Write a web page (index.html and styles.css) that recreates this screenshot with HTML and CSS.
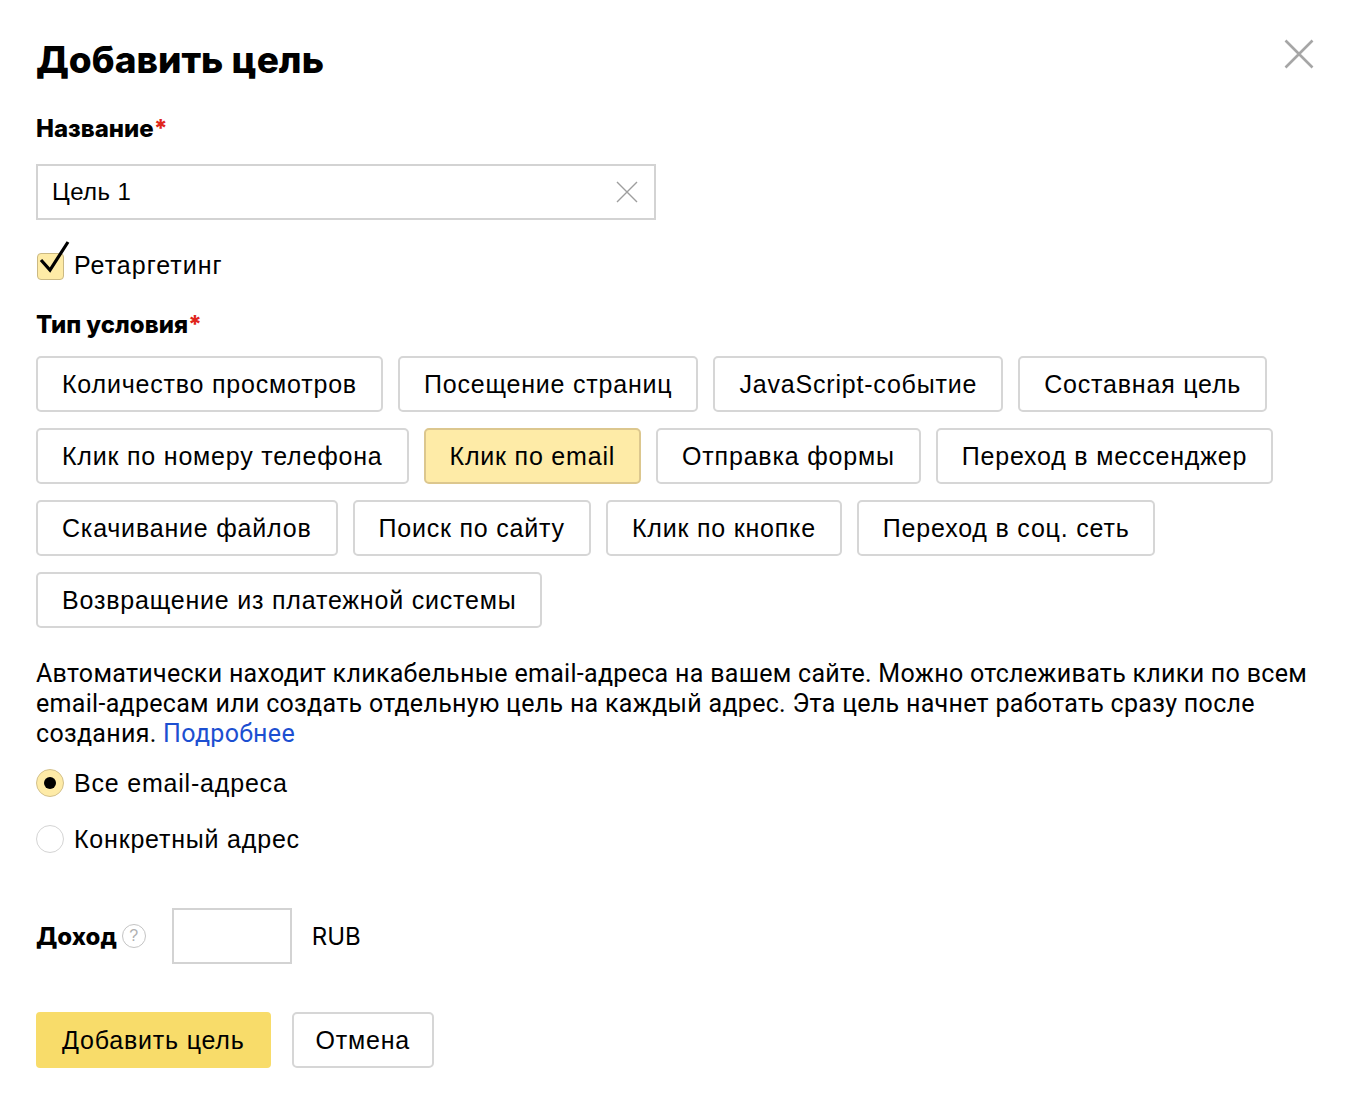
FILE: index.html
```html
<!DOCTYPE html>
<html lang="ru">
<head>
<meta charset="utf-8">
<link rel="stylesheet" href="styles.css">
</head>
<body>
<div class="dialog">
  <div class="header">
    <h1 class="title">Добавить цель</h1>
    <span class="close" aria-label="Закрыть">
      <svg width="30" height="30" viewBox="0 0 30 30"><path d="M1.5 1.5 L28.5 28.5 M28.5 1.5 L1.5 28.5" stroke="#a6a6a6" stroke-width="2.6" fill="none"/></svg>
    </span>
  </div>

  <div class="label">Название<span class="req">*</span></div>
  <div class="input name-input">
    <span class="input-text">Цель 1</span>
    <svg class="clear" width="22" height="22" viewBox="0 0 22 22"><path d="M1 1 L21 21 M21 1 L1 21" stroke="#9e9e9e" stroke-width="1.4" fill="none"/></svg>
  </div>

  <div class="check-row">
    <span class="checkbox">
      <svg class="tick" width="34" height="36" viewBox="0 0 34 36"><path d="M4 20 L13 30 L31 2" stroke="#000" stroke-width="3.2" fill="none" stroke-linejoin="miter"/></svg>
    </span>
    <span class="check-label">Ретаргетинг</span>
  </div>

  <div class="label label-type">Тип условия<span class="req">*</span></div>
  <div class="types">
    <span class="btn">Количество просмотров</span>
    <span class="btn">Посещение страниц</span>
    <span class="btn">JavaScript-событие</span>
    <span class="btn">Составная цель</span>
    <span class="btn">Клик по номеру телефона</span>
    <span class="btn btn-selected">Клик по email</span>
    <span class="btn">Отправка формы</span>
    <span class="btn">Переход в мессенджер</span>
    <span class="btn">Скачивание файлов</span>
    <span class="btn">Поиск по сайту</span>
    <span class="btn">Клик по кнопке</span>
    <span class="btn">Переход в соц. сеть</span>
    <span class="btn">Возвращение из платежной системы</span>
  </div>

  <p class="desc">Автоматически находит кликабельные email-адреса на вашем сайте. Можно отслеживать клики по всем email-адресам или создать отдельную цель на каждый адрес. Эта цель начнет работать сразу после создания. <a class="link" href="#">Подробнее</a></p>

  <div class="radios">
    <div class="radio-row">
      <span class="radio radio-on"><span class="dot"></span></span>
      <span class="radio-label">Все email-адреса</span>
    </div>
    <div class="radio-row">
      <span class="radio"></span>
      <span class="radio-label">Конкретный адрес</span>
    </div>
  </div>

  <div class="income">
    <span class="income-label">Доход</span>
    <span class="hint">?</span>
    <span class="input income-input"></span>
    <span class="currency">RUB</span>
  </div>

  <div class="actions">
    <span class="btn btn-primary">Добавить цель</span>
    <span class="btn btn-cancel">Отмена</span>
  </div>
</div>
</body>
</html>
```

FILE: styles.css
```css
* { box-sizing: border-box; }

body {
  margin: 0;
  background: #fff;
  color: #000;
  font-family: "Liberation Sans", Arial, sans-serif;
}

.dialog {
  width: 1352px;
  padding: 30px 36px 0 36px;
}

.header {
  display: flex;
  justify-content: space-between;
  align-items: flex-start;
}

.title {
  margin: 0;
  font-family: Inter, "Noto Sans", sans-serif;
  font-weight: 800;
  font-size: 37px;
  line-height: 60px;
  letter-spacing: 0;
}

.close {
  display: block;
  margin-top: 9px;
  margin-right: 2px;
  width: 30px;
  height: 30px;
}

.label {
  margin-top: 23px;
  font-family: Inter, "Noto Sans", sans-serif;
  font-weight: 800;
  font-size: 24px;
  line-height: 32px;
  letter-spacing: 0;
}

.req {
  color: #e0251c;
}

.input {
  border: 2px solid #d3d3d3;
  background: #fff;
}

.name-input {
  margin-top: 19px;
  width: 620px;
  height: 56px;
  display: flex;
  align-items: center;
  justify-content: space-between;
  padding: 0 16px 0 14px;
}

.input-text {
  font-size: 24px;
  letter-spacing: 0.4px;
}

.clear {
  display: block;
}

.check-row {
  margin-top: 25px;
  display: flex;
  align-items: center;
  height: 36px;
}

.checkbox {
  position: relative;
  width: 27px;
  height: 27px;
  margin-left: 1px;
  margin-top: 6px;
  border: 1px solid #cbb983;
  border-radius: 4px;
  background: #feeba6;
}

.tick {
  position: absolute;
  left: -1px;
  top: -14px;
}

.check-label {
  margin-left: 10px;
  margin-top: 4px;
  font-size: 25px;
  letter-spacing: 1px;
}

.label-type {
  margin-top: 28px;
}

.types {
  margin-top: 15px;
  display: flex;
  flex-wrap: wrap;
  gap: 16px 15px;
  width: 1280px;
}

.btn {
  display: inline-flex;
  align-items: center;
  height: 56px;
  padding: 0 24px;
  border: 2px solid #d6d6d6;
  border-radius: 5px;
  background: #fff;
  font-size: 25px;
  letter-spacing: 0.8px;
  white-space: nowrap;
}

.btn-selected {
  background: #feeba7;
  border-color: #dcc78e;
}

.desc {
  margin: 31px 0 0 0;
  width: 1280px;
  font-family: Roboto, "Noto Sans", sans-serif;
  font-size: 25px;
  line-height: 30px;
  letter-spacing: 0.3px;
}

.link {
  color: #1c4fd1;
  text-decoration: none;
}

.radios {
  margin-top: 20px;
  display: flex;
  flex-direction: column;
  gap: 28px;
}

.radio-row {
  display: flex;
  align-items: center;
  height: 28px;
}

.radio {
  width: 28px;
  height: 28px;
  border-radius: 50%;
  border: 1px solid #d4d4d4;
  background: #fff;
  display: flex;
  align-items: center;
  justify-content: center;
}

.radio-on {
  background: #feeba7;
  border-color: #d3c18c;
}

.dot {
  width: 12px;
  height: 12px;
  border-radius: 50%;
  background: #000;
}

.radio-label {
  margin-left: 10px;
  font-size: 25px;
  letter-spacing: 0.8px;
}

.income {
  margin-top: 55px;
  display: flex;
  align-items: center;
  height: 56px;
}

.income-label {
  font-family: Inter, "Noto Sans", sans-serif;
  font-weight: 800;
  font-size: 24px;
  letter-spacing: 0;
}

.hint {
  margin-left: 5px;
  width: 24px;
  height: 24px;
  border-radius: 50%;
  border: 1px solid #c4c4c4;
  color: #b0b0b0;
  font-size: 16px;
  letter-spacing: 0;
  display: flex;
  align-items: center;
  justify-content: center;
}

.income-input {
  margin-left: 26px;
  width: 120px;
  height: 56px;
}

.currency {
  margin-left: 20px;
  font-family: Inter, "Noto Sans", sans-serif;
  font-size: 24px;
}

.actions {
  margin-top: 48px;
  display: flex;
  gap: 21px;
}

.btn-primary {
  background: #f8dc6a;
  border-color: #f8dc6a;
  border-radius: 4px;
  padding: 0 24px;
}

.btn-cancel {
  padding: 0 22px;
}
```
